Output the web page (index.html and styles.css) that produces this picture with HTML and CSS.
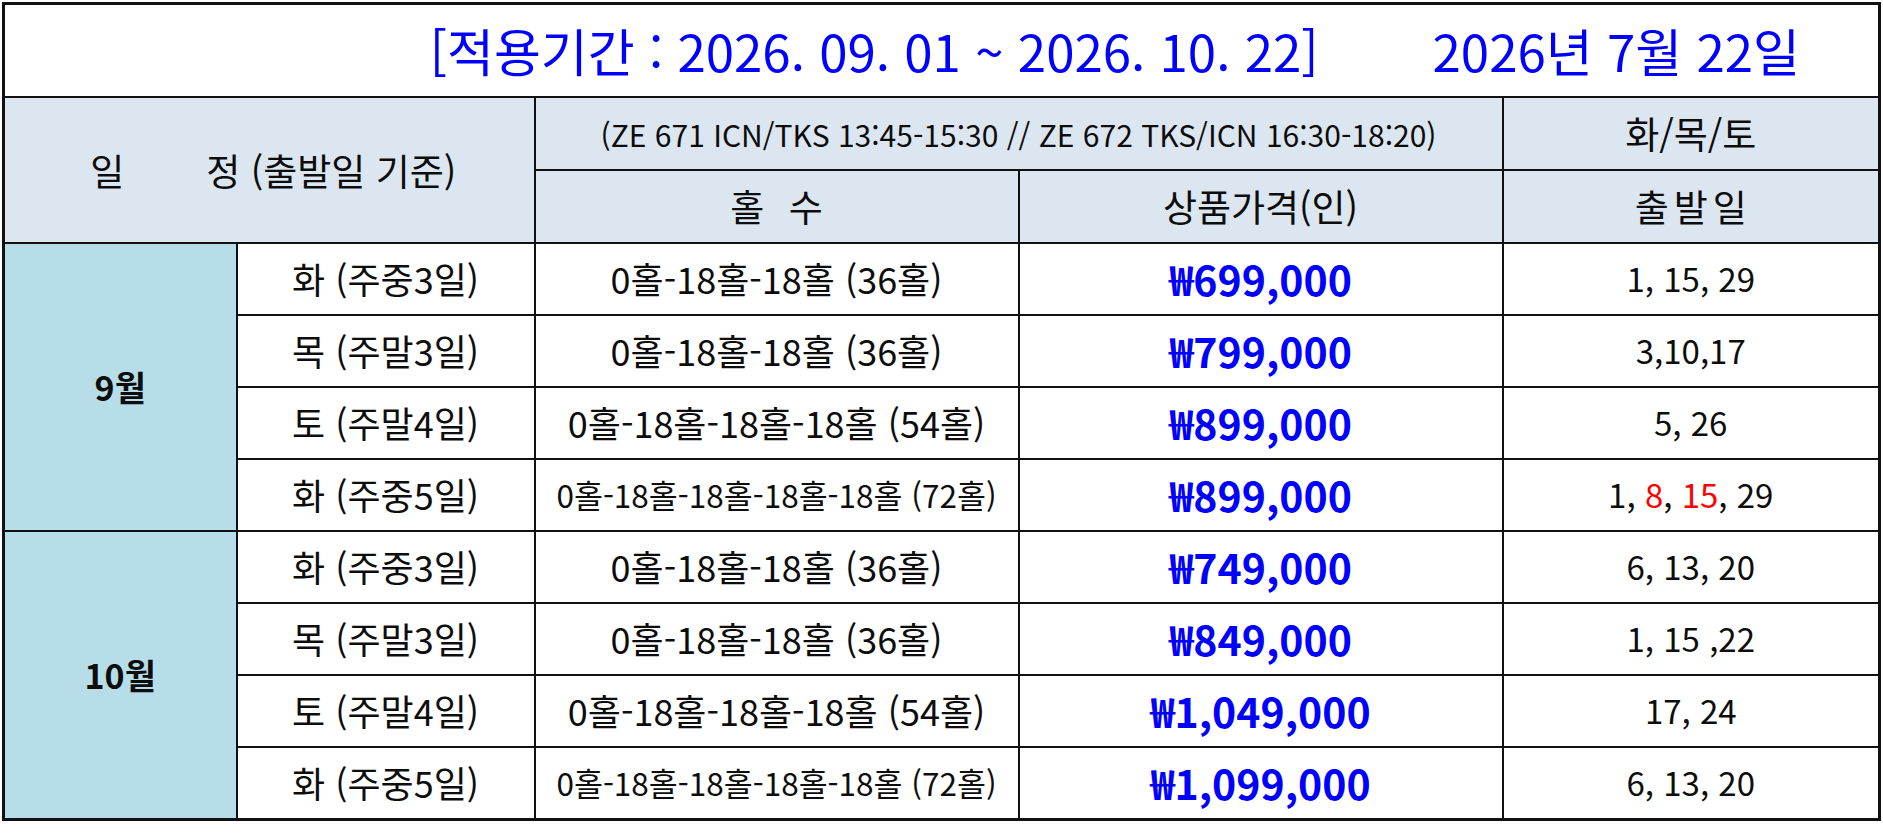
FILE: index.html
```html
<!DOCTYPE html>
<html lang="ko">
<head>
<meta charset="utf-8">
<title>적용기간 요금표</title>
<link rel="stylesheet" href="styles.css">
</head>
<body>
<table class="price-table">
  <colgroup>
    <col class="c-month">
    <col class="c-day">
    <col class="c-holes">
    <col class="c-price">
    <col class="c-dates">
  </colgroup>
  <thead>
    <tr class="title-row">
      <th colspan="5">
        <div class="title">
          <span>[적용기간 : 2026. 09. 01 ~ 2026. 10. 22]</span>
          <span>2026년 7월 22일</span>
        </div>
      </th>
    </tr>
    <tr class="head-row">
      <th colspan="2" rowspan="2" class="h-sched"><span class="gap">일</span>정 (출발일 기준)</th>
      <th colspan="2" class="h-flight">(ZE 671 ICN/TKS 13:45-15:30 // ZE 672 TKS/ICN 16:30-18:20)</th>
      <th>화/목/토</th>
    </tr>
    <tr class="head-row">
      <th class="h-holes">홀 수</th>
      <th>상품가격(인)</th>
      <th class="h-dep">출발일</th>
    </tr>
  </thead>
  <tbody>
    <tr>
      <td rowspan="4" class="month">9월</td>
      <td>화 (주중3일)</td>
      <td>0홀-18홀-18홀 (36홀)</td>
      <td class="price">₩699,000</td>
      <td class="dates">1, 15, 29</td>
    </tr>
    <tr>
      <td>목 (주말3일)</td>
      <td>0홀-18홀-18홀 (36홀)</td>
      <td class="price">₩799,000</td>
      <td class="dates">3,10,17</td>
    </tr>
    <tr>
      <td>토 (주말4일)</td>
      <td>0홀-18홀-18홀-18홀 (54홀)</td>
      <td class="price">₩899,000</td>
      <td class="dates">5, 26</td>
    </tr>
    <tr>
      <td>화 (주중5일)</td>
      <td class="long">0홀-18홀-18홀-18홀-18홀 (72홀)</td>
      <td class="price">₩899,000</td>
      <td class="dates">1, <span class="red">8</span>, <span class="red">15</span>, 29</td>
    </tr>
    <tr>
      <td rowspan="4" class="month">10월</td>
      <td>화 (주중3일)</td>
      <td>0홀-18홀-18홀 (36홀)</td>
      <td class="price">₩749,000</td>
      <td class="dates">6, 13, 20</td>
    </tr>
    <tr>
      <td>목 (주말3일)</td>
      <td>0홀-18홀-18홀 (36홀)</td>
      <td class="price">₩849,000</td>
      <td class="dates">1, 15 ,22</td>
    </tr>
    <tr>
      <td>토 (주말4일)</td>
      <td>0홀-18홀-18홀-18홀 (54홀)</td>
      <td class="price">₩1,049,000</td>
      <td class="dates">17, 24</td>
    </tr>
    <tr>
      <td>화 (주중5일)</td>
      <td class="long">0홀-18홀-18홀-18홀-18홀 (72홀)</td>
      <td class="price">₩1,099,000</td>
      <td class="dates">6, 13, 20</td>
    </tr>
  </tbody>
</table>
</body>
</html>
```

FILE: styles.css
```css
html, body {
  margin: 0;
  padding: 0;
  background: #ffffff;
}

body {
  font-family: "Noto Sans CJK KR", "Noto Sans", sans-serif;
  color: #0d0d0d;
  padding: 2px 0 0 2px;
}

.price-table {
  border-collapse: collapse;
  table-layout: fixed;
  width: 1876px;
  border: 3px solid #111111;
}

.c-month { width: 233px; }
.c-day { width: 298px; }
.c-holes { width: 484px; }
.c-price { width: 484px; }
.c-dates { width: 377px; }

.price-table th,
.price-table td {
  border: 2px solid #111111;
  padding: 0;
  text-align: center;
  vertical-align: middle;
  font-weight: 400;
  line-height: 1.2;
  white-space: nowrap;
}

.title-row th {
  height: 91px;
  background: #ffffff;
}

.title {
  display: flex;
  justify-content: flex-end;
  align-items: center;
  gap: 114px;
  padding-right: 78px;
  font-size: 51px;
  color: #0000ff;
}

.head-row th {
  height: 71px;
  background: #dce6f1;
  font-size: 37px;
}

.price-table th.h-sched {
  padding-left: 8px;
}

.h-sched .gap {
  margin-right: 82px;
}

.price-table th.h-flight {
  font-size: 30px;
}

.h-holes {
  word-spacing: 14px;
}

.price-table th.h-dep {
  letter-spacing: 5px;
  padding-left: 5px;
}

.price-table td {
  height: 70px;
  font-size: 36px;
  background: #ffffff;
}

.price-table td.month {
  background: #b7dee8;
  font-weight: 700;
  font-size: 34px;
}

.price-table td.long {
  font-size: 31.5px;
}

.price-table td.dates {
  font-size: 33px;
}

.price-table td.price {
  font-weight: 700;
  font-size: 41px;
  color: #0000ff;
}

.red {
  color: #ff0000;
}
```
